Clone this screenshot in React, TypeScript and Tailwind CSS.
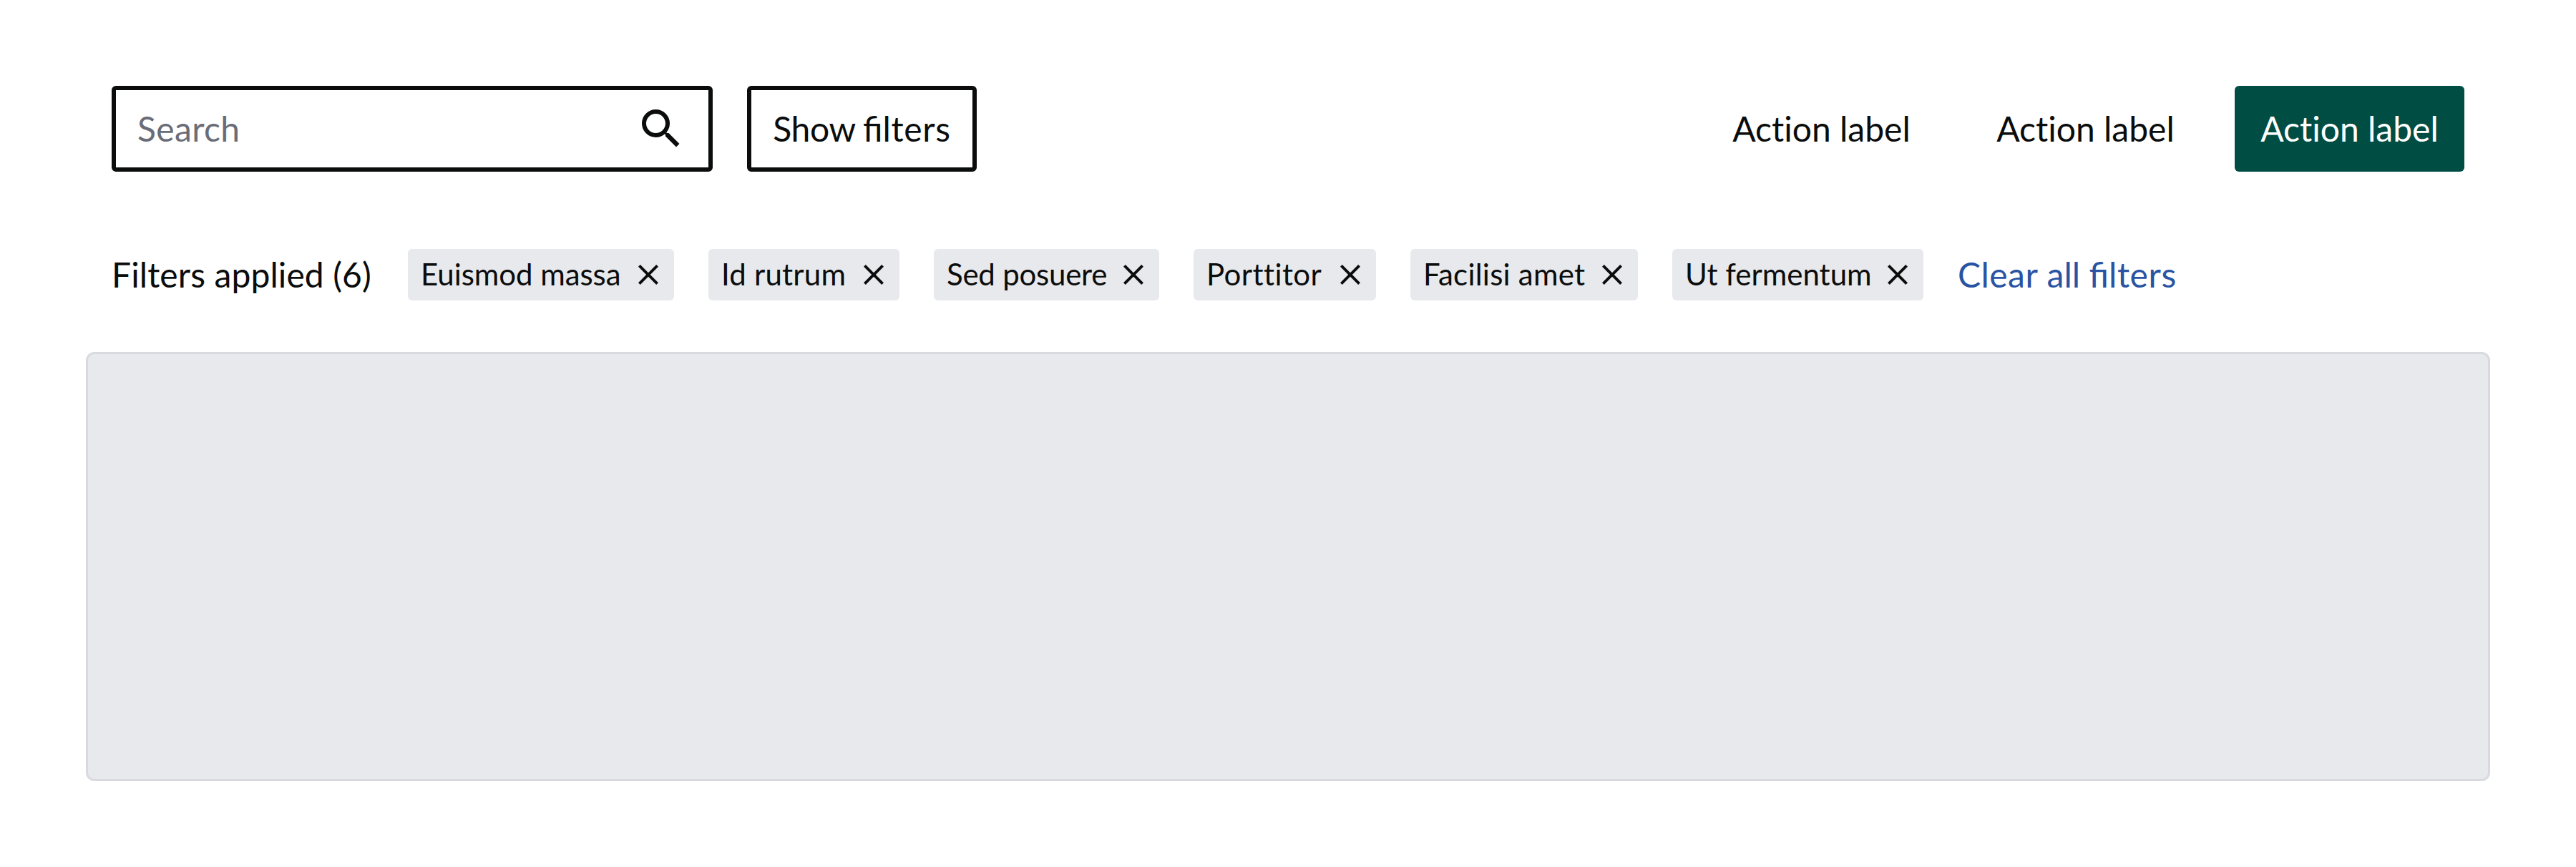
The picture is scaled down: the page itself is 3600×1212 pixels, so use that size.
const chips: { label: string; box: string; text: string }[] = [
  { label: "Euismod massa", box: "w-[372px]", text: "tracking-[-0.06px]" },
  { label: "Id rutrum", box: "w-[267px]", text: "tracking-[0.2px]" },
  { label: "Sed posuere", box: "w-[315px]", text: "tracking-[-0.24px]" },
  { label: "Porttitor", box: "w-[255px]", text: "tracking-[0.42px]" },
  { label: "Facilisi amet", box: "w-[318px]", text: "tracking-[0.23px]" },
  { label: "Ut fermentum", box: "w-[351px]", text: "tracking-normal" },
];

function SearchIcon() {
  return (
    <svg className="size-[72px]" viewBox="0 0 24 24" fill="currentColor">
      <path d="M15.5 14h-.79l-.28-.27A6.471 6.471 0 0 0 16 9.5 6.5 6.5 0 1 0 9.5 16c1.61 0 3.09-.59 4.23-1.57l.27.28v.79l5 4.99L20.49 19l-4.99-5zm-6 0C7.01 14 5 11.99 5 9.5S7.01 5 9.5 5 14 7.01 14 9.5 11.99 14 9.5 14z" />
    </svg>
  );
}

function CloseIcon() {
  return (
    <svg className="size-12 shrink-0" viewBox="0 0 24 24" fill="currentColor">
      <path d="M19 6.41L17.59 5 12 10.59 6.41 5 5 6.41 10.59 12 5 17.59 6.41 19 12 13.41 17.59 19 19 17.59 13.41 12z" />
    </svg>
  );
}

function FiltersWord() {
  return (
    <span>
      fi<span className="tracking-[0.65px]">lters</span>
    </span>
  );
}

export default function App() {
  return (
    <main className="h-[1212px] w-[3600px] bg-white px-[120px] pt-[120px] font-['Lato',sans-serif] text-5xl text-[#0b0c0c]">
      <div className="flex h-[120px] items-center px-9">
        <div className="flex h-[120px] w-[840px] items-center justify-between rounded-md border-6 border-[#0b0c0c] px-[30px]">
          <span className="tracking-[0.35px] text-[#6a6d78]">Search</span>
          <SearchIcon />
        </div>
        <button className="ml-12 h-[120px] w-[321px] rounded-md border-6 border-[#0b0c0c] whitespace-pre [word-spacing:-2px]">
          <span className="tracking-[-0.4px]">Show</span> <FiltersWord />
        </button>
        <div className="ml-auto flex items-center gap-12 [font-variant-ligatures:none]">
          <button className="h-[120px] w-[321px]">Action label</button>
          <button className="h-[120px] w-[321px]">Action label</button>
          <button className="h-[120px] w-[321px] rounded-md bg-[#004d43] text-white">Action label</button>
        </div>
      </div>
      <div className="mt-[108px] flex h-[72px] items-center gap-12 px-9 whitespace-nowrap">
        <span className="w-[366px] tracking-[0.09px]">Filters applied (6)</span>
        {chips.map((chip) => (
          <span
            key={chip.label}
            className={`flex h-[72px] items-center justify-between rounded-md bg-[#e8e9ed] pr-3 pl-[18px] text-[42px] [font-variant-ligatures:none] ${chip.box}`}
          >
            <span className={`pb-0.5 ${chip.text}`}>{chip.label}</span>
            <CloseIcon />
          </span>
        ))}
        <a className="text-[#2954a3]">
          <span className="tracking-[0.45px]">Clear</span> all <FiltersWord />
        </a>
      </div>
      <div className="mt-[72px] h-[600px] rounded-xl border-3 border-[#d8dae0] bg-[#e8e9ed]" />
    </main>
  );
}
